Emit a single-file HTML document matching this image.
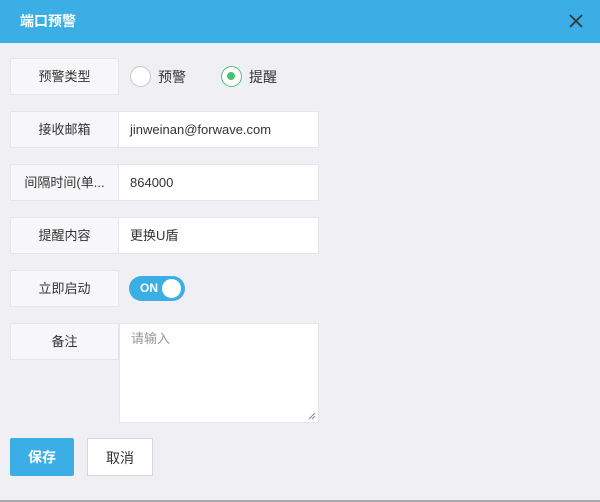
<!DOCTYPE html><html><head><meta charset="utf-8"><style>
*{box-sizing:border-box;margin:0;padding:0}
body{width:600px;height:502px;background:#f0f0f4;font-family:"Liberation Sans","Noto Sans CJK SC",sans-serif;font-size:13px;color:#333;position:relative;overflow:hidden}
.hd{position:absolute;left:0;top:0;width:600px;height:43px;background:#3bafe5;color:#fff;font-size:14px;line-height:43px;padding-left:20px;font-weight:bold}
.x{position:absolute;right:17px;top:14px}
.lb{position:absolute;left:10px;width:109px;height:37px;background:#f7f7f9;border:1px solid #e6e6ea;text-align:center;line-height:35px}
.in{position:absolute;left:119px;width:200px;height:37px;background:#fff;border:1px solid #e6e6ea;border-left:none;line-height:35px;padding-left:11px}
.rad{position:absolute;top:66px;width:21px;height:21px;border-radius:50%;border:1.5px solid #c8c8c8;background:#fff}
.rad.on{border-color:#4cbf73}
.rad.on:after{content:"";position:absolute;left:5px;top:5px;width:8px;height:8px;border-radius:50%;background:#4cbf73}
.rt{position:absolute;top:67px;font-size:14px}
.sw{position:absolute;left:129px;top:276px;width:56px;height:25px;border-radius:13px;background:#3bafe5;color:#fff;font-size:12px;font-weight:bold;line-height:25px;padding-left:11px}
.sw:after{content:"";position:absolute;right:4px;top:3px;width:19px;height:19px;border-radius:50%;background:#fff}
.ta{position:absolute;left:119px;top:323px;width:200px;height:100px;background:#fff;border:1px solid #e6e6ea;color:#999;padding:4px 11px}
.btn{position:absolute;top:438px;height:38px;line-height:38px;text-align:center;font-size:14px}
</style></head><body>
<div class="hd">端口预警<svg class="x" width="14" height="14" viewBox="0 0 14 14"><path d="M1 1L13 13M13 1L1 13" stroke="#333" stroke-width="1.6"/></svg></div>
<div class="lb" style="top:58px">预警类型</div>
<div class="rad" style="left:130px"></div><div class="rt" style="left:158px">预警</div>
<div class="rad on" style="left:221px"></div><div class="rt" style="left:249px">提醒</div>
<div class="lb" style="top:111px">接收邮箱</div><div class="in" style="top:111px">jinweinan@forwave.com</div>
<div class="lb" style="top:164px">间隔时间(单...</div><div class="in" style="top:164px">864000</div>
<div class="lb" style="top:217px">提醒内容</div><div class="in" style="top:217px">更换U盾</div>
<div class="lb" style="top:270px">立即启动</div><div class="sw">ON</div>
<div class="lb" style="top:323px">备注</div><div class="ta">请输入<svg style="position:absolute;right:2px;bottom:2px" width="8" height="8"><path d="M1 7L7 1M4 7L7 4" stroke="#888"/></svg></div>
<div class="btn" style="left:10px;width:64px;background:#3bafe5;color:#fff;border-radius:2px;font-weight:bold">保存</div>
<div class="btn" style="left:87px;width:66px;background:#fff;border:1px solid #d6d6d6">取消</div>
<div style="position:absolute;left:0;top:500px;width:600px;height:2px;background:#a8a8a8"></div>
</body></html>
